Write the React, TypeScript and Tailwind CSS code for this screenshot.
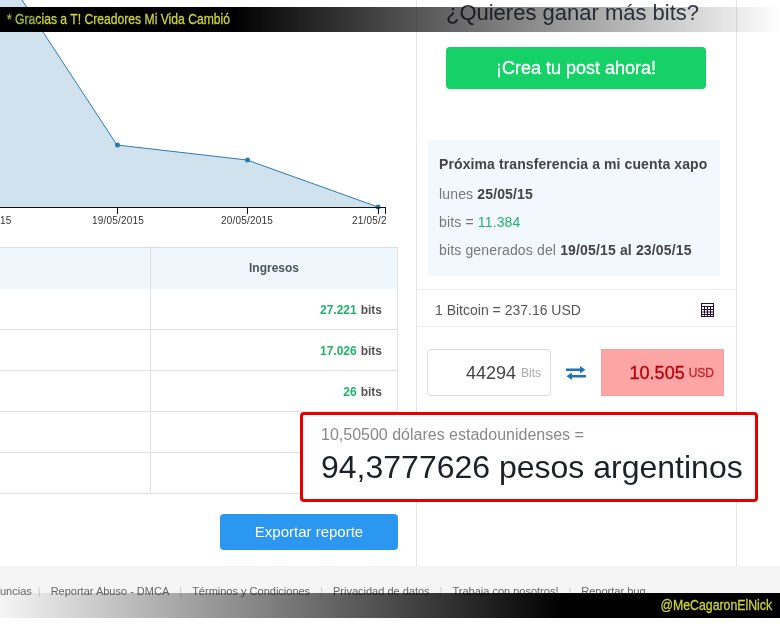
const rows = [
  { value: "27.221" },
  { value: "17.026" },
  { value: "26" },
  { value: "" },
  { value: "" },
];

const links = ["Reportar Abuso - DMCA", "Términos y Condiciones", "Privacidad de datos", "Trabaja con nosotros!", "Reportar bug"];

function Chart() {
  return (
    <svg width="398" height="247" viewBox="0 0 398 247" className="block">
      <path d="M0 0 H22 L117 145 L247 160 L378 207 H0 Z" fill="#d1e2ef" />
      <path d="M22 0 L117 145 L247 160 L378 207" fill="none" stroke="#2c7bb0" strokeWidth="1" />
      <circle cx="117.5" cy="145" r="2.5" fill="#2c7bb0" />
      <circle cx="247.5" cy="160" r="2.5" fill="#2c7bb0" />
      <circle cx="378" cy="207" r="2.5" fill="#2c7bb0" />
      <rect x="0" y="207" width="385" height="1" fill="#111" />
      <rect x="117" y="207" width="1" height="7" fill="#111" />
      <rect x="247" y="207" width="1" height="7" fill="#111" />
      <rect x="378" y="207" width="1" height="7" fill="#111" />
      <rect x="385" y="207" width="1" height="7" fill="#111" />
      <g fontFamily="Liberation Sans" fontSize="10" fill="#333" letterSpacing="0.2">
        <text x="0" y="224">15</text>
        <text x="92" y="224">19/05/2015</text>
        <text x="221" y="224">20/05/2015</text>
        <text x="352" y="224">21/05/2</text>
      </g>
    </svg>
  );
}

function Calculator() {
  return (
    <svg width="13" height="14" viewBox="0 0 13 14" className="block">
      <rect x="0.5" y="0.5" width="12" height="13" fill="#fff" stroke="#221133" />
      <path d="M0 3.5H13M0 6.5H13M0 9H13M0 11.5H13M3.5 4V14M6.5 4V14M9.5 4V14" stroke="#221133" strokeWidth="1" fill="none" />
    </svg>
  );
}

function SwapArrows() {
  return (
    <svg width="20" height="14" viewBox="0 0 20 14" className="block" fill="#1b75bb">
      <rect x="0" y="2.5" width="15" height="2.5" />
      <path d="M14 0 L19.5 3.75 L14 7.5 Z" />
      <rect x="5" y="9" width="15" height="2.5" />
      <path d="M6 6.5 L0.5 10.25 L6 14 Z" />
    </svg>
  );
}

export default function App() {
  return (
    <div className="relative w-[780px] h-[624px] overflow-hidden bg-white font-['Liberation_Sans',Arial,sans-serif]">
      <div className="flex h-[566px]">
        <div className="w-[398px] flex flex-col items-stretch">
          <Chart />
          <div className="border-t border-r border-[#dde1e6]">
            <div className="grid grid-cols-[151px_1fr] h-[41px] bg-[#f0f7fc]">
              <div className="border-r border-[#d9dfe5]" />
              <div className="flex items-center justify-center pb-[2px] text-xs font-bold text-[#4a5560]">Ingresos</div>
            </div>
            {rows.map((r, i) => (
              <div key={i} className="grid grid-cols-[151px_1fr] h-[41px] border-b border-[#dde1e6]">
                <div className="border-r border-[#d9dfe5]" />
                <div className="flex items-center justify-end gap-1 pt-px pr-[15px] text-xs font-bold">
                  {r.value && <span className="text-[#22b36b]">{r.value}</span>}
                  {r.value && <span className="text-[#555]">bits</span>}
                </div>
              </div>
            ))}
          </div>
          <div className="flex justify-end mt-5">
            <button className="w-[178px] h-9 rounded-sm bg-[#2b97f0] text-white text-[15px]">Exportar reporte</button>
          </div>
        </div>

        <div className="ml-[18px] w-[321px] border-x border-[#e6e6e6] flex flex-col">
          <h2 className="text-center text-[22px] leading-[24px] mt-[1px] text-[#3b4149] pr-[8px] h-[46px]">¿Quieres ganar más bits?</h2>
          <div className="ml-[29px] w-[260px] h-[42px] rounded-sm bg-[#15d167] text-white text-[18px] [-webkit-text-stroke:0.3px_#ffffff] flex items-center justify-center">¡Crea tu post ahora!</div>
          <div className="ml-[11px] mt-[51px] w-[292px] h-[136px] bg-[#f2f8fd] pl-[11px] pt-[14px] text-sm text-[#777] tracking-[0.15px]">
            <div className="font-bold text-[#444] leading-5 tracking-[0.1px]">Próxima transferencia a mi cuenta xapo</div>
            <div className="mt-[10px] leading-5">lunes <b className="text-[#444]">25/05/15</b></div>
            <div className="mt-2 leading-5">bits = <span className="text-[#22b36b]">11.384</span></div>
            <div className="mt-2 leading-5">bits generados del <b className="text-[#444]">19/05/15 al 23/05/15</b></div>
          </div>
          <div className="mt-[13px] h-[38px] border-y border-[#eeeeee] flex items-center justify-between pt-[3px] pl-[18px] pr-[22px] text-sm text-[#555]">
            <span>1 Bitcoin = 237.16 USD</span>
            <Calculator />
          </div>
          <div className="mt-[22px] flex items-center pl-[10px]">
            <div className="w-[124px] h-[47px] border border-[#dddddd] rounded-sm flex items-center justify-end gap-[5px] pr-[9px]">
              <span className="text-lg text-[#444]">44294</span>
              <span className="text-xs text-[#aaa]">Bits</span>
            </div>
            <div className="w-[50px] flex justify-center">
              <SwapArrows />
            </div>
            <div className="w-[123px] h-[47px] bg-[#fda5a5] border border-[#f5a0a0] flex items-center justify-end gap-[4px] pr-[9px]">
              <span className="text-lg text-[#b8000c] [-webkit-text-stroke:0.3px_#b8000c]">10.505</span>
              <span className="text-xs text-[#c8202a] [-webkit-text-stroke:0.3px_#c8202a]">USD</span>
            </div>
          </div>
        </div>
      </div>

      <div className="h-[52px] bg-[#f5f5f5] flex items-start pt-[18px] text-[11px] leading-[14px] text-[#666]">
        <span className="-mr-[4px]">uncias</span>
        {links.map((l) => (
          <span key={l} className="flex">
            <span className="mx-[10px] text-[#ccc]">|</span>
            <span>{l}</span>
          </span>
        ))}
      </div>

      {/* overlays */}
      <div className="absolute left-[300px] top-[412px] w-[458px] h-[90px] bg-white border-[3px] border-[#e60000] rounded-[4px] pl-[18px] pt-[10px]">
        <div className="text-base leading-5 text-[#888]">10,50500 dólares estadounidenses =</div>
        <div className="text-[32px] leading-[38px] mt-[3px] text-[#1c2128] whitespace-nowrap">94,3777626 pesos argentinos</div>
      </div>

      <div className="absolute left-0 top-[7px] w-[780px] h-[25px] bg-gradient-to-r from-black from-[30%] to-transparent flex items-center pl-[7px] mix-blend-multiply">
        <span className="text-[#cdd43a] text-[15px] [-webkit-text-stroke:0.3px_#cdd43a] whitespace-nowrap origin-left scale-x-[0.81]">* Gracias a T! Creadores Mi Vida Cambió</span>
      </div>
      <div className="absolute left-0 top-[593px] w-[780px] h-[25px] bg-gradient-to-r from-transparent to-black to-[72%] flex items-center justify-end pr-[8px]">
        <span className="text-[#cdd43a] text-[15px] [-webkit-text-stroke:0.3px_#cdd43a] whitespace-nowrap origin-right scale-x-[0.82]">@MeCagaronElNick</span>
      </div>
    </div>
  );
}
